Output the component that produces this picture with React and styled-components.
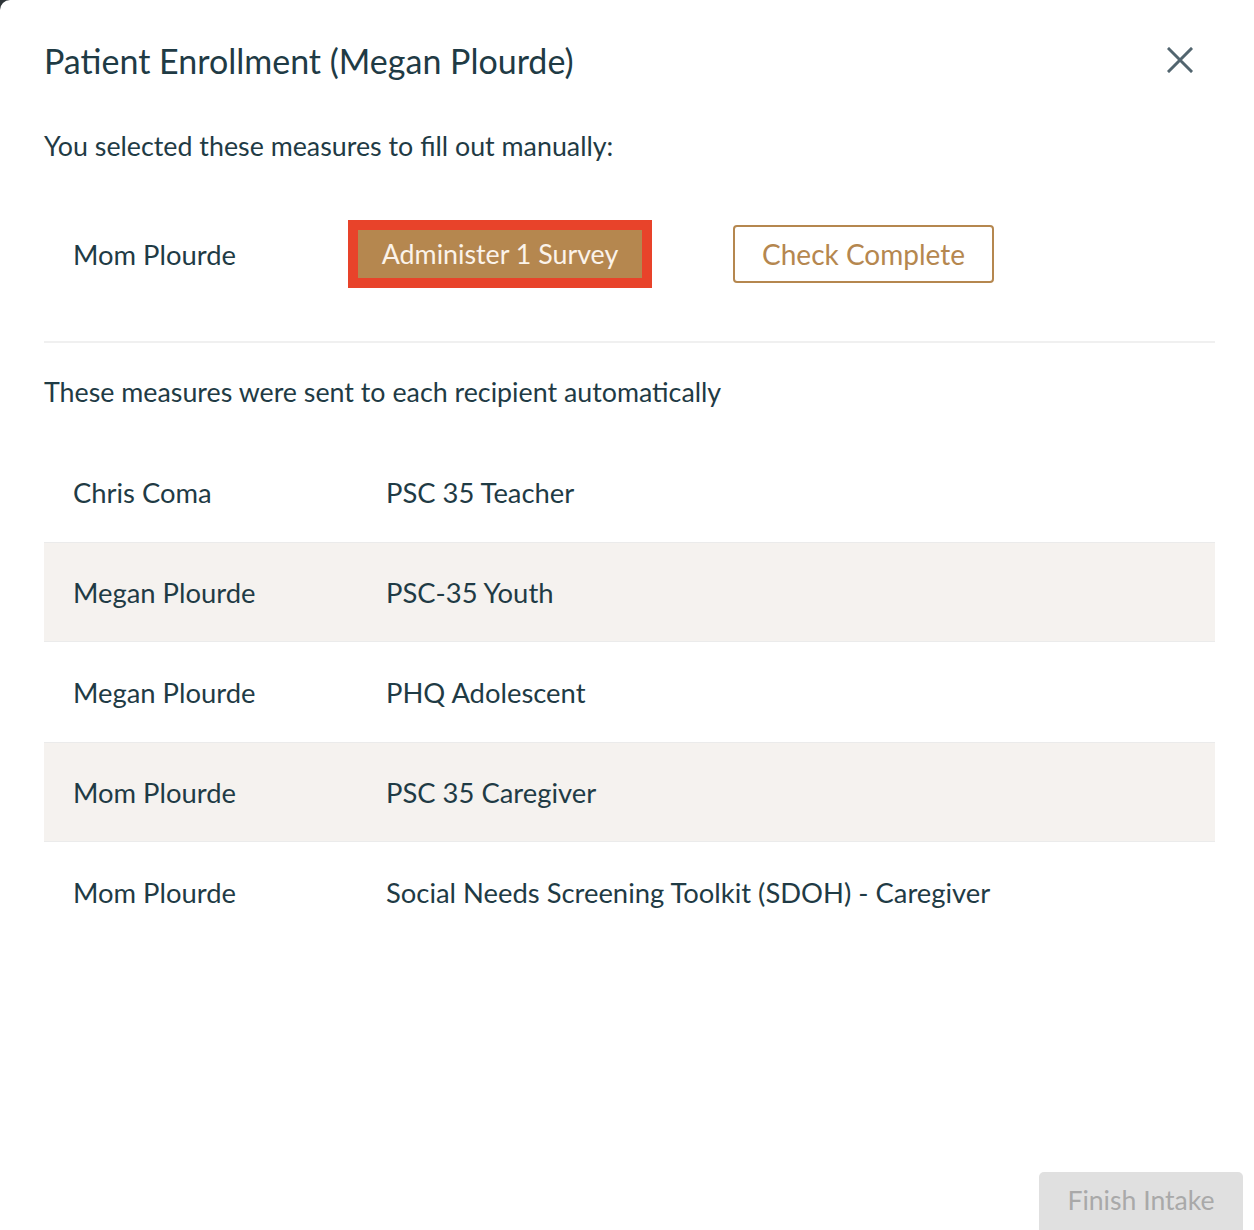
import React from "react";
import styled, { createGlobalStyle } from "styled-components";

const GlobalStyle = createGlobalStyle`
	html, body {
		margin: 0;
		padding: 0;
		background: #2e3538;
	}
	body {
		font-family: Lato, "Open Sans", sans-serif;
		color: #1f3b45;
	}
`;

const Modal = styled.div`
	box-sizing: border-box;
	width: 1254px;
	height: 1230px;
	overflow: hidden;
	background: #fff;
	border-top-left-radius: 10px;
	display: flex;
	flex-direction: column;
	padding: 38px 39px 0 44px;
`;

const Header = styled.header`
	display: flex;
	justify-content: space-between;
	align-items: center;
	height: 44px;
`;

const Title = styled.h2`
	margin: 0;
	font-weight: 400;
	font-size: 34px;
	color: #1f3b45;
`;

const CloseButton = styled.button`
	border: 0;
	background: none;
	padding: 0;
	margin-right: 19px;
	width: 32px;
	height: 32px;
	display: flex;
	align-items: center;
	justify-content: center;
	cursor: pointer;
`;

const Lead = styled.p`
	margin: ${props => props.$top}px 0 0;
	font-size: 26.8px;
	line-height: 32px;
`;

const ManualRow = styled.div`
	display: flex;
	align-items: center;
	margin-top: 58px;
	padding-left: 29px;
	height: 68px;
`;

const Name = styled.div`
	width: ${props => props.$width}px;
	flex-shrink: 0;
	font-size: 27.4px;
`;

const Highlight = styled.div`
	background: #e8432a;
	padding: 10px;
	display: flex;
`;

const FillButton = styled.button`
	border: 0;
	background: #b5874f;
	color: #fbf3ea;
	font-family: inherit;
	font-size: 26.8px;
	width: 284px;
	height: 48px;
	padding: 0;
`;

const OutlineButton = styled.button`
	margin-left: 81px;
	box-sizing: border-box;
	width: 261px;
	height: 58px;
	border: 2px solid #b5874f;
	border-radius: 4px;
	background: #fff;
	color: #b5874f;
	font-family: inherit;
	font-size: 28px;
	padding: 0;
`;

const Divider = styled.hr`
	border: 0;
	border-top: 2px solid #f0f0f0;
	margin: 53px 0 0;
`;

const Table = styled.div`
	margin-top: 34px;
	display: flex;
	flex-direction: column;
`;

const Row = styled.div`
	display: flex;
	align-items: center;
	height: 100px;
	padding-left: 29px;
	box-sizing: border-box;
	background: ${props => (props.$shaded ? "#f5f2ef" : "#fff")};
	border-top: 1px solid ${props => (props.$shaded ? "#ebebeb" : "transparent")};
	border-bottom: 1px solid ${props => (props.$shaded ? "#ebebeb" : "transparent")};
`;

const Measure = styled.div`
	font-size: 27.4px;
`;

const Footer = styled.footer`
	margin-top: auto;
	display: flex;
	justify-content: flex-end;
	margin-right: -28px;
`;

const FinishButton = styled.button`
	width: 204px;
	height: 64px;
	margin-bottom: -6px;
	border: 0;
	border-radius: 5px;
	background: #e0e0e0;
	color: #a9a9a9;
	font-family: inherit;
	font-size: 26.6px;
	padding: 0 0 8px;
`;

const sent = [
	{ name: "Chris Coma", measure: "PSC 35 Teacher" },
	{ name: "Megan Plourde", measure: "PSC-35 Youth" },
	{ name: "Megan Plourde", measure: "PHQ Adolescent" },
	{ name: "Mom Plourde", measure: "PSC 35 Caregiver" },
	{ name: "Mom Plourde", measure: "Social Needs Screening Toolkit (SDOH) - Caregiver" },
];

const App = () => (
	<>
		<GlobalStyle />
		<Modal>
			<Header>
				<Title>Patient Enrollment (Megan Plourde)</Title>
				<CloseButton aria-label="Close">
					<svg width="26" height="26" viewBox="0 0 26 26">
						<path d="M2 2 L24 24 M24 2 L2 24" stroke="#52656f" strokeWidth="3" strokeLinecap="square" />
					</svg>
				</CloseButton>
			</Header>

			<Lead $top={48}>You selected these measures to fill out manually:</Lead>

			<ManualRow>
				<Name $width={275}>Mom Plourde</Name>
				<Highlight>
					<FillButton>Administer 1 Survey</FillButton>
				</Highlight>
				<OutlineButton>Check Complete</OutlineButton>
			</ManualRow>

			<Divider />

			<Lead $top={33}>These measures were sent to each recipient automatically</Lead>

			<Table>
				{sent.map((item, i) => (
					<Row key={i} $shaded={i % 2 === 1}>
						<Name $width={313}>{item.name}</Name>
						<Measure>{item.measure}</Measure>
					</Row>
				))}
			</Table>

			<Footer>
				<FinishButton>Finish Intake</FinishButton>
			</Footer>
		</Modal>
	</>
);

export default App;
